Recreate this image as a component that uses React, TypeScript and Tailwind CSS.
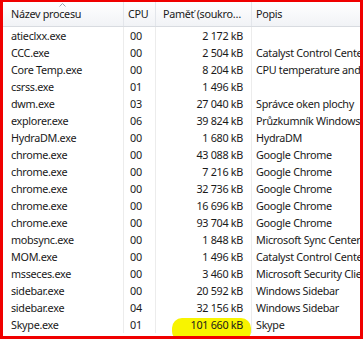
import React from 'react';

interface Row {
  name: string;
  cpu: string;
  mem: string;
  desc: string;
}

const rows: Row[] = [
  { name: 'atieclxx.exe', cpu: '00', mem: '2 172 kB', desc: '' },
  { name: 'CCC.exe', cpu: '00', mem: '2 504 kB', desc: 'Catalyst Control Center' },
  { name: 'Core Temp.exe', cpu: '00', mem: '8 204 kB', desc: 'CPU temperature and' },
  { name: 'csrss.exe', cpu: '01', mem: '1 496 kB', desc: '' },
  { name: 'dwm.exe', cpu: '03', mem: '27 040 kB', desc: 'Správce oken plochy' },
  { name: 'explorer.exe', cpu: '06', mem: '39 824 kB', desc: 'Průzkumník Windows' },
  { name: 'HydraDM.exe', cpu: '00', mem: '1 680 kB', desc: 'HydraDM' },
  { name: 'chrome.exe', cpu: '00', mem: '43 088 kB', desc: 'Google Chrome' },
  { name: 'chrome.exe', cpu: '00', mem: '7 216 kB', desc: 'Google Chrome' },
  { name: 'chrome.exe', cpu: '00', mem: '32 736 kB', desc: 'Google Chrome' },
  { name: 'chrome.exe', cpu: '00', mem: '16 696 kB', desc: 'Google Chrome' },
  { name: 'chrome.exe', cpu: '00', mem: '93 704 kB', desc: 'Google Chrome' },
  { name: 'mobsync.exe', cpu: '00', mem: '1 848 kB', desc: 'Microsoft Sync Center' },
  { name: 'MOM.exe', cpu: '00', mem: '1 496 kB', desc: 'Catalyst Control Center' },
  { name: 'msseces.exe', cpu: '00', mem: '3 460 kB', desc: 'Microsoft Security Client' },
  { name: 'sidebar.exe', cpu: '00', mem: '20 592 kB', desc: 'Windows Sidebar' },
  { name: 'sidebar.exe', cpu: '04', mem: '32 156 kB', desc: 'Windows Sidebar' },
  { name: 'Skype.exe', cpu: '01', mem: '101 660 kB', desc: 'Skype' },
];

const App: React.FC = () => {
  return (
    <div
      className="w-[363px] h-[339px] overflow-hidden bg-white border-[#f00000] border-l-[3px] border-t-2 border-r-[3px] border-b-[3px] text-[10.8px] tracking-[-0.3px] text-[#1a1a1a]"
      style={{ fontFamily: '"Noto Sans", "Open Sans", sans-serif' }}
    >
      <div className="flex h-[25px] border-b border-[#d8dbe0] bg-gradient-to-b from-white to-[#f1f3f6] whitespace-nowrap">
        <div className="relative w-[121px] shrink-0 border-r border-[#e3e6eb] pl-2 flex items-center">
          <span>Název procesu</span>
          <svg className="absolute left-[56px] top-[1px]" width="7" height="4" viewBox="0 0 7 4">
            <path d="M0.5 3.5 L3.5 0.5 L6.5 3.5" fill="none" stroke="#9aa3b0" strokeWidth="1" />
          </svg>
        </div>
        <div className="w-[32px] shrink-0 border-r border-[#e3e6eb] pl-[4px] flex items-center">CPU</div>
        <div className="w-[96px] shrink-0 border-r border-[#e3e6eb] pl-[7px] flex items-center">Paměť (soukro…</div>
        <div className="flex-1 pl-[4px] flex items-center">Popis</div>
      </div>
      <div className="flex flex-col">
        {rows.map((r, i) => (
          <div key={i} className="flex h-[17px] shrink-0 whitespace-nowrap leading-[17px]">
            <div className="w-[121px] shrink-0 border-r border-[#ececec] pl-2">{r.name}</div>
            <div className="w-[32px] shrink-0 border-r border-[#ececec] pl-[6px]">{r.cpu}</div>
            <div className="relative w-[96px] shrink-0 border-r border-[#ececec] pr-2 text-right">
              {i === rows.length - 1 && (
                <span className="absolute left-[16px] right-0 top-[2px] h-[23px] rounded-[10px] bg-[#f8f400]" />
              )}
              <span className="relative">{r.mem}</span>
            </div>
            <div className="flex-1 pl-[4px] overflow-hidden">{r.desc}</div>
          </div>
        ))}
      </div>
    </div>
  );
};

export default App;
